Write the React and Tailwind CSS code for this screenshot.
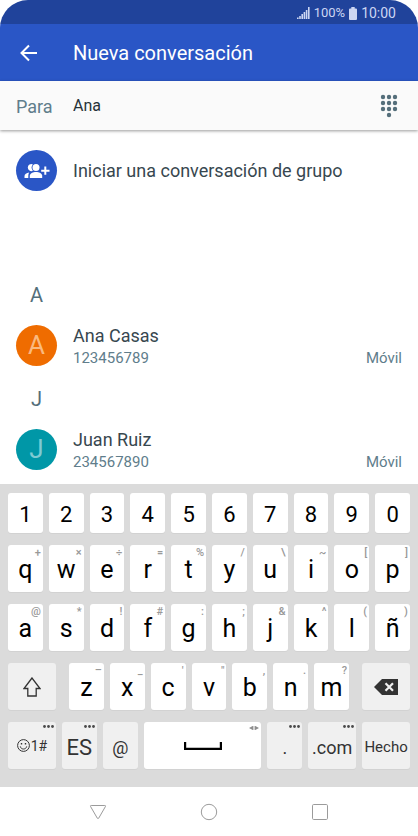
import { useState } from "react";

const LETTER_ROWS = [
  [["q", "+"], ["w", "×"], ["e", "÷"], ["r", "="], ["t", "%"], ["y", "/"], ["u", "\\"], ["i", "~"], ["o", "["], ["p", "]"]],
  [["a", "@"], ["s", "*"], ["d", "!"], ["f", "#"], ["g", ":"], ["h", ";"], ["j", "&"], ["k", "^"], ["l", "("], ["ñ", ")"]],
];

const LAST_ROW = [["z", "–"], ["x", "_"], ["c", "'"], ["v", "\""], ["b", ","], ["n", "."], ["m", "?"]];

const CONTACTS = [
  { letter: "A", name: "Ana Casas", phone: "123456789", color: "bg-[#ef6c00] text-[#fab97f]" },
  { letter: "J", name: "Juan Ruiz", phone: "234567890", color: "bg-[#0097a7] text-[#7fcbd3]" },
];

function StatusBar() {
  return (
    <div className="flex h-6 items-center justify-end bg-[#20439b] pt-[2px] pr-[22px] text-[#ccd6f3]">
      <svg className="mr-1 h-3 w-[13px]" viewBox="0 0 13 12" fill="currentColor" aria-hidden="true">
        <path d="M0 10.5h1.6V12H0zM2.2 9h1.6v3H2.2zM4.4 7H6v5H4.4zM6.6 5h1.6v7H6.6zM8.8 3h1.6v9H8.8zM11 0h1.6v12H11z" />
      </svg>
      <span className="text-[13px] leading-6">100%</span>
      <svg className="mx-1 h-[13px] w-2" viewBox="0 0 8 13" fill="currentColor" aria-hidden="true">
        <path d="M2.3 0h3.4v1.5H7a1 1 0 0 1 1 1V12a1 1 0 0 1-1 1H1a1 1 0 0 1-1-1V2.500a1 1 0 0 1 1-1h1.300z" />
      </svg>
      <span className="text-sm leading-6">10:00</span>
    </div>
  );
}

function DialpadIcon() {
  return (
    <svg className="h-6 w-[18px]" viewBox="0 0 18 24" fill="currentColor" aria-hidden="true">
      {[3, 9, 15].map((y) => [3, 9, 15].map((x) => <circle key={`${x}-${y}`} cx={x} cy={y} r="2.2" />))}
      <circle cx="9" cy="21" r="2.2" />
    </svg>
  );
}

function GroupAddIcon() {
  return (
    <svg className="h-4 w-[26px]" viewBox="0 0 26 16" fill="currentColor" aria-hidden="true">
      <circle cx="12" cy="4.600" r="3.500" />
      <path d="M12 9.100c-2.900 0-6.200 1.400-6.200 3.700V15h12.400v-2.200C18.200 10.500 14.900 9.100 12 9.100z" />
      <path d="M8.900 1.500A3.500 3.500 0 1 0 8.900 7.700 4.700 4.700 0 0 1 8.900 1.500z" />
      <path d="M5.200 9.500C2.500 10 .5 11.200.5 13v2h3.800v-2.200c0-1.300.3-2.400.9-3.300z" />
      <path d="M20.300 3.600h2v3.100h3.200v2h-3.200v3.100h-2V8.700h-3.100v-2h3.100z" />
    </svg>
  );
}

function Key({ children, hint, className = "bg-white text-black", ...props }) {
  return (
    <button
      type="button"
      className={`relative flex min-w-0 basis-0 items-center justify-center rounded-[3px] shadow-[0_1px_0_#d2d2d2] ${className}`}
      {...props}
    >
      {children}
      {hint && <span className="absolute top-[2px] right-[2px] text-[11px] leading-3 font-medium text-[#999]">{hint}</span>}
    </button>
  );
}

function LetterKey({ letter, hint }) {
  return (
    <Key hint={hint} data-value={letter} className="grow bg-white pt-[3px] text-[25px] leading-7 text-black">
      {letter}
    </Key>
  );
}

function Dots() {
  return (
    <svg className="absolute top-[3px] right-[2px] h-[3px] w-[11px]" viewBox="0 0 11 3" fill="#4a4a4a" aria-hidden="true">
      <circle cx="1.5" cy="1.5" r="1.4" />
      <circle cx="5.5" cy="1.5" r="1.4" />
      <circle cx="9.5" cy="1.5" r="1.4" />
    </svg>
  );
}

function Keyboard({ onType, onDelete }) {
  const gray = "bg-[#f0f0f0] text-[#333]";
  return (
    <div
      className="flex flex-col gap-3 bg-[#dbdbdb] px-2 pt-[9px] pb-[18px]"
      onClick={(e) => {
        const value = e.target.closest("button")?.dataset.value;
        if (value) onType(value);
      }}
    >
      <div className="flex h-10 gap-[6px]">
        {"1234567890".split("").map((n) => (
          <Key key={n} data-value={n} className="grow bg-white pt-[3px] text-[22px] leading-7 text-black">{n}</Key>
        ))}
      </div>
      {LETTER_ROWS.map((row) => (
        <div key={row[0][0]} className="flex h-[47px] gap-[6px]">
          {row.map(([letter, hint]) => <LetterKey key={letter} letter={letter} hint={hint} />)}
        </div>
      ))}
      <div className="flex h-[47px] gap-[13px]">
        <Key className={`grow-[48] ${gray}`} aria-label="Mayúsculas">
          <svg className="h-5 w-[18px]" viewBox="0 0 18 20" fill="none" stroke="currentColor" strokeWidth="1.3" aria-hidden="true">
            <path d="M9 1 1 11.500h3.800V19h8.400v-7.500H17z" />
          </svg>
        </Key>
        <div className="flex grow-[280] basis-0 gap-[6px]">
          {LAST_ROW.map(([letter, hint]) => <LetterKey key={letter} letter={letter} hint={hint} />)}
        </div>
        <Key className={`grow-[48] ${gray}`} aria-label="Borrar" onClick={onDelete}>
          <svg className="h-4 w-6" viewBox="0 0 24 16" aria-hidden="true">
            <path d="M0 8 8 0h16v16H8z" fill="#333" />
            <path d="m11.500 4.200 7.500 7.600m0-7.600-7.500 7.600" stroke="#f0f0f0" strokeWidth="2.2" />
          </svg>
        </Key>
      </div>
      <div className="flex h-[47px] gap-[6px]">
        <Key className={`grow-[48] gap-[1px] text-sm ${gray}`}>
          <svg className="size-[13px]" viewBox="0 0 13 13" fill="none" stroke="currentColor" strokeWidth="1" aria-hidden="true">
            <circle cx="6.5" cy="6.5" r="5.9" />
            <path d="M3.300 7.400c.4 1.700 1.600 2.600 3.200 2.600s2.800-.9 3.200-2.600" />
            <path d="M4.500 4v1.500M8.500 4v1.500" strokeWidth="1.400" />
          </svg>
          1#
          <Dots />
        </Key>
        <Key className={`grow-[35] pt-1 text-[22px] ${gray}`}>ES<Dots /></Key>
        <Key className={`grow-[35] pt-1 text-lg ${gray}`} data-value="@">@</Key>
        <Key className="grow-[118] bg-white text-black" data-value=" " aria-label="Espacio">
          <svg className="h-2 w-[38px]" viewBox="0 0 38 8" fill="none" stroke="currentColor" strokeWidth="2.2" aria-hidden="true">
            <path d="M1.100 0v6.900h35.800V0" />
          </svg>
          <svg className="absolute top-1 right-[2px] h-1 w-[10px]" viewBox="0 0 10 4" fill="#8e8e8e" aria-hidden="true">
            <path d="M4.400-.4v4.800L0 2zM5.600-.4v4.800L10 2z" />
          </svg>
        </Key>
        <Key className={`grow-[35] pt-1 text-lg ${gray}`} data-value=".">.<Dots /></Key>
        <Key className={`grow-[48] pt-1 text-lg ${gray}`} data-value=".com">.com<Dots /></Key>
        <Key className={`grow-[48] pt-1 text-[15px] ${gray}`}>Hecho</Key>
      </div>
    </div>
  );
}

function NavBar() {
  const icon = "size-[18px] fill-none stroke-[#9b9b9b]";
  return (
    <nav className="flex h-[49px] items-center justify-center gap-[93px] bg-white">
      <button type="button" aria-label="Atrás">
        <svg className={icon} viewBox="0 0 18 18" aria-hidden="true">
          <path d="M2.200 2.500h13.600q1.200 0 .6 1.100L9.700 15.200q-.7 1-1.400 0L1.600 3.600q-.6-1.100.6-1.100z" />
        </svg>
      </button>
      <button type="button" aria-label="Inicio">
        <svg className={icon} viewBox="0 0 18 18" aria-hidden="true">
          <circle cx="9" cy="9" r="7.7" />
        </svg>
      </button>
      <button type="button" aria-label="Recientes">
        <svg className={icon} viewBox="0 0 18 18" aria-hidden="true">
          <rect x="1.5" y="1.5" width="15" height="15" rx="1.2" />
        </svg>
      </button>
    </nav>
  );
}

export default function App() {
  const [to, setTo] = useState("Ana");

  return (
    <div className="flex min-h-screen flex-col overflow-hidden rounded-t-[28px] bg-white font-['Roboto',sans-serif]">
      <StatusBar />
      <header className="flex h-[57px] items-center bg-[#2a56c6] text-white">
        <a href="#atras" aria-label="Atrás" className="ml-5 w-[53px]">
          <svg className="size-[18px]" viewBox="0 0 18 18" fill="none" stroke="currentColor" strokeWidth="2" aria-hidden="true">
            <path d="M17 9H2M9 1.500 1.500 9 9 16.500" />
          </svg>
        </a>
        <h1 className="text-xl">Nueva conversación</h1>
      </header>

      <div className="relative flex h-[49px] items-center bg-[#fafafa] pr-5 shadow-[0_1px_3px_rgba(0,0,0,0.4)]">
        <label htmlFor="para" className="w-[73px] pt-[2px] pl-4 text-lg text-[#607d8b]">Para</label>
        <input
          id="para"
          className="min-w-0 flex-1 bg-transparent text-base text-[#263238] outline-none"
          value={to}
          onChange={(e) => setTo(e.target.value)}
        />
        <button type="button" aria-label="Teclado numérico" className="text-[#546e7a]">
          <DialpadIcon />
        </button>
      </div>

      <main className="flex-1 px-4 pt-5">
        <button type="button" className="flex w-full items-center gap-4 text-left">
          <span className="flex size-[41px] items-center justify-center rounded-full bg-[#2a56c6] text-white">
            <GroupAddIcon />
          </span>
          <span className="text-lg text-[#37474f]">Iniciar una conversación de grupo</span>
        </button>

        <div className="mt-[92px] flex flex-col gap-[18px]">
          {CONTACTS.map((c) => (
            <section key={c.name}>
              <h2 className="w-[41px] text-center text-xl leading-6 text-[#546e7a]">{c.letter}</h2>
              <a href="#contacto" className="mt-[18px] flex items-start gap-4">
                <span className={`flex size-[41px] items-center justify-center rounded-full text-[26px] ${c.color}`}>
                  {c.letter}
                </span>
                <span className="flex-1">
                  <span className="block text-lg leading-[22px] text-[#37474f]">{c.name}</span>
                  <span className="flex justify-between text-[15px] leading-[22px] text-[#607d8b]">
                    <span>{c.phone}</span>
                    <span>Móvil</span>
                  </span>
                </span>
              </a>
            </section>
          ))}
        </div>
      </main>

      <Keyboard onType={(value) => setTo(to + value)} onDelete={() => setTo(to.slice(0, -1))} />
      <NavBar />
    </div>
  );
}
